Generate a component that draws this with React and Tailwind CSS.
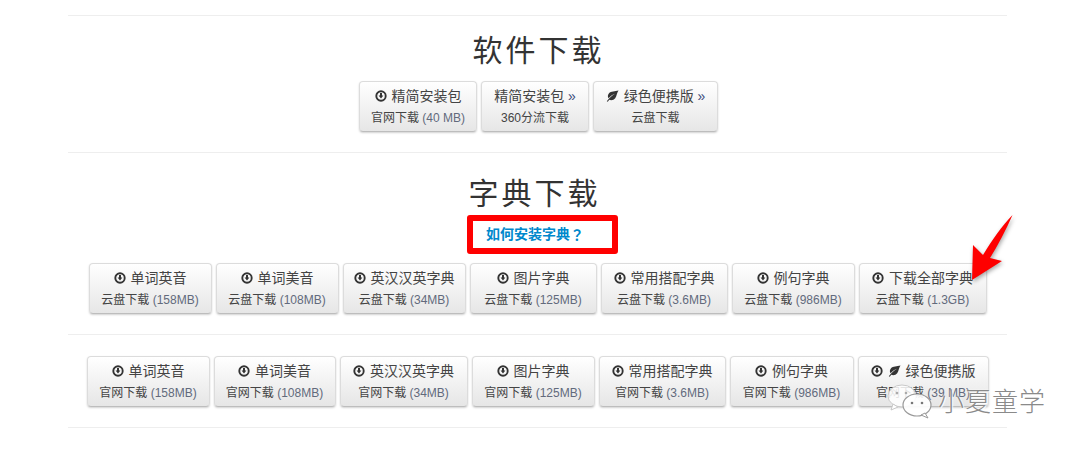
const FONT = "font-['Liberation_Sans','Noto_Sans_CJK_SC',sans-serif]";

function DownIcon() {
  return (
    <svg width="12" height="12" viewBox="0 0 12 12" className="inline-block shrink-0">
      <circle cx="6" cy="6" r="4.7" fill="none" stroke="#333" strokeWidth="1.9" />
      <path d="M5 3h2v2.6h1.4L6 8.6 3.6 5.6H5z" fill="#333" />
    </svg>
  );
}

function LeafIcon() {
  return (
    <svg width="13" height="12" viewBox="0 0 13 12" className="inline-block shrink-0">
      <path d="M12.5 .5C9 1.5 5 1 3 3.2 1.400 5 1.700 7.300 2.600 8.200 4.500 6 6.500 4.700 9 3.800 6.500 5.300 3.500 7.500 .8 11.300l1 .5 1.400-2c2 .9 4.600.3 6-1.500 1.600-2.100 1.500-5.300 3.300-7.800z" fill="#333" />
    </svg>
  );
}

function DlButton({ w, top, sub, size, icon = 'down', leaf, more }) {
  return (
    <a className={`flex h-[51px] flex-col items-center rounded-[4px] border border-[#dcdcdc] border-b-[#bdbdbd] bg-gradient-to-b from-white to-[#e6e6e6] pt-[4px] text-[#444] shadow-[0_1px_2px_rgba(0,0,0,0.18)] ${w}`}>
      <span className="flex h-[20px] items-center gap-[5px] whitespace-nowrap text-[14px] leading-[20px]">
        {icon === 'down' && <DownIcon />}
        {leaf && <LeafIcon />}
        <span>{top}{more && <span className="text-[#3a4a7a]"> »</span>}</span>
      </span>
      <span className="mt-[2px] whitespace-nowrap text-[12px] leading-[20px]">
        {sub}
        {size && <span className="text-[#626a7c]"> {size}</span>}
      </span>
    </a>
  );
}

function Row({ children, className = '' }) {
  return <div className={`flex justify-center gap-[4px] ${className}`}>{children}</div>;
}

export default function App() {
  return (
    <div className={`relative h-[451px] w-[1080px] overflow-hidden bg-white ${FONT}`}>
      <div className="ml-[68px] flex w-[939px] flex-col pt-[15px]">
        <hr className="border-[#eeeeee]" />
        <h2 className="mt-[15px] h-[40px] pl-[2px] text-center text-[30px] leading-[40px] font-normal tracking-[3px] text-[#333]">软件下载</h2>
        <Row className="mt-[10px] pl-[2px]">
          <DlButton w="w-[118px]" top="精简安装包" sub="官网下载" size="(40 MB)" />
          <DlButton w="w-[108px]" top="精简安装包" sub="360分流下载" icon="none" more />
          <DlButton w="w-[125px]" top="绿色便携版" sub="云盘下载" icon="none" leaf more />
        </Row>
        <hr className="mt-[20px] border-[#eeeeee]" />
        <h2 className="mt-[21px] mr-[6px] h-[40px] text-center text-[30px] leading-[40px] font-normal tracking-[3px] text-[#333]">字典下载</h2>
        <div className="mt-[1px] ml-[10px] flex h-[39px] w-[151px] items-center self-center rounded-[3px] border-[6px] border-[#ff0000] pl-[13px] text-[14px] font-bold text-[#0088cc]">
          如何安装字典<span className="font-['Noto_Sans_CJK_TC',sans-serif]">？</span>
        </div>
        <Row className="mt-[9px]">
          <DlButton w="w-[123px]" top="单词英音" sub="云盘下载" size="(158MB)" />
          <DlButton w="w-[123px]" top="单词美音" sub="云盘下载" size="(108MB)" />
          <DlButton w="w-[123px]" top="英汉汉英字典" sub="云盘下载" size="(34MB)" />
          <DlButton w="w-[127px]" top="图片字典" sub="云盘下载" size="(125MB)" />
          <DlButton w="w-[127px]" top="常用搭配字典" sub="云盘下载" size="(3.6MB)" />
          <DlButton w="w-[123px]" top="例句字典" sub="云盘下载" size="(986MB)" />
          <DlButton w="w-[128px]" top="下载全部字典" sub="云盘下载" size="(1.3GB)" />
        </Row>
        <hr className="mt-[20px] border-[#eeeeee]" />
        <Row className="mt-[21px]">
          <DlButton w="w-[123px]" top="单词英音" sub="官网下载" size="(158MB)" />
          <DlButton w="w-[122px]" top="单词美音" sub="官网下载" size="(108MB)" />
          <DlButton w="w-[128px]" top="英汉汉英字典" sub="官网下载" size="(34MB)" />
          <DlButton w="w-[123px]" top="图片字典" sub="官网下载" size="(125MB)" />
          <DlButton w="w-[127px]" top="常用搭配字典" sub="官网下载" size="(3.6MB)" />
          <DlButton w="w-[124px]" top="例句字典" sub="官网下载" size="(986MB)" />
          <DlButton w="w-[131px]" top="绿色便携版" sub="官网下载" size="(39 MB)" leaf />
        </Row>
        <hr className="mt-[20px] border-[#eeeeee]" />
      </div>

      {/* red annotation arrow */}
      <svg className="absolute top-[210px] left-[965px] drop-shadow-[1px_2px_2px_rgba(0,0,0,0.35)]" width="52" height="74" viewBox="0 0 52 74">
        <path d="M47.500 5C41 20 33 35 25 48L37 51 7 70 8 35 18 45C27 30 37 16 47.500 5z" fill="#fe0000" />
      </svg>

      {/* watermark */}
      <svg className="absolute top-[382px] left-[885px]" width="50" height="38" viewBox="0 0 50 38">
        <ellipse cx="17" cy="14" rx="14" ry="11" fill="#fff" fillOpacity="0.85" stroke="#c9c9c9" strokeWidth="1" />
        <path d="M8 22l-2 6 7-3z" fill="#fff" stroke="#c9c9c9" strokeWidth="1" />
        <ellipse cx="32" cy="23" rx="14" ry="11" fill="#fff" fillOpacity="0.9" stroke="#9a9a9a" strokeWidth="1.200" />
        <path d="M40 31l3 5-7-3z" fill="#fff" stroke="#9a9a9a" strokeWidth="1" />
        <circle cx="12" cy="11" r="1.300" fill="#aaa" />
        <circle cx="21" cy="11" r="1.300" fill="#aaa" />
        <circle cx="27" cy="21" r="1.300" fill="#777" />
        <circle cx="37" cy="21" r="1.300" fill="#777" />
      </svg>
      <div className="absolute top-[386px] left-[938px] text-[26px] leading-[32px] font-light tracking-[1px] whitespace-nowrap text-[#8a8a8a] [text-shadow:0_0_2px_#fff,1px_1px_1px_#fff]">小夏童学</div>
    </div>
  );
}
